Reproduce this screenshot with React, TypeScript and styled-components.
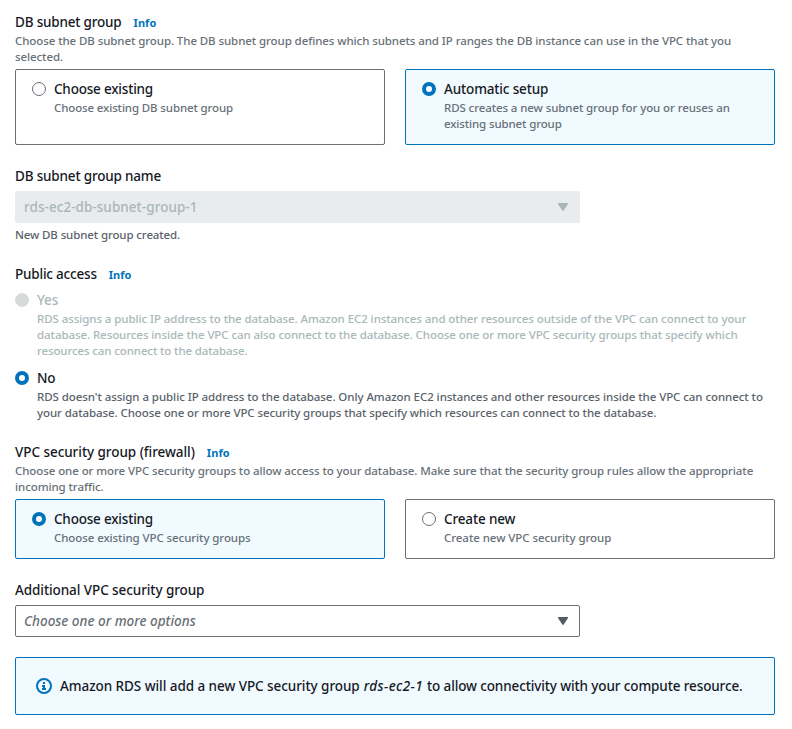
import React from "react";
import styled, { createGlobalStyle } from "styled-components";

const color = {
  text: "#16191f",
  hint: "#687078",
  strongHint: "#5a626b",
  control: "#545b64",
  link: "#0073bb",
  disabled: "#aab7b8",
  disabledFill: "#d5dbdb",
  disabledBg: "#e9ecec",
  activeBg: "#f1faff",
};

const GlobalStyle = createGlobalStyle`
  *, *::before, *::after { box-sizing: border-box; }
  body {
    margin: 0;
    background: #fff;
    color: ${color.text};
    font-family: "Noto Sans", "Open Sans", sans-serif;
    font-weight: 500;
  }
`;

type Tracking = { $ls?: number };

const Page = styled.main`
  display: flex;
  flex-direction: column;
  gap: 20px;
  width: 792px;
  min-height: 729px;
  padding: 11px 17px 14px 15px;
`;

const Field = styled.section`
  display: flex;
  flex-direction: column;
`;

const LabelRow = styled.div`
  display: flex;
  align-items: baseline;
  gap: 12px;
  height: 22px;
`;

const Label = styled.span<Tracking & { $disabled?: boolean }>`
  display: block;
  font-size: 13.5px;
  line-height: 22px;
  white-space: nowrap;
  letter-spacing: ${(p) => p.$ls ?? 0}px;
  color: ${(p) => (p.$disabled ? color.disabled : color.text)};
`;

const InfoLink = styled.a`
  font-size: 11px;
  line-height: 22px;
  font-weight: 700;
  letter-spacing: 0.05px;
  color: ${color.link};
  cursor: pointer;
`;

const Hint = styled.span<Tracking & { $tone?: "hint" | "strongHint" | "disabled" }>`
  display: block;
  font-size: 11.5px;
  line-height: 16px;
  white-space: nowrap;
  letter-spacing: ${(p) => p.$ls ?? -0.085}px;
  color: ${(p) => color[p.$tone ?? "hint"]};
`;

const Tiles = styled.div`
  display: grid;
  grid-template-columns: 1fr 1fr;
  gap: 20px;
  margin-top: 4px;
`;

const Tile = styled.label<{ $selected?: boolean }>`
  display: flex;
  gap: 8px;
  padding: 8px 16px 12px;
  border: 1px solid ${(p) => (p.$selected ? color.link : color.hint)};
  border-radius: 2px;
  background: ${(p) => (p.$selected ? color.activeBg : "#fff")};
`;

const Radios = styled.div`
  display: flex;
  flex-direction: column;
  gap: 8px;
  margin-top: 4px;
`;

const RadioRow = styled.label`
  display: flex;
  gap: 8px;
`;

const Dot = styled.span<{ $state: "on" | "off" | "disabled" }>`
  flex: none;
  width: 14px;
  height: 14px;
  margin-top: 4px;
  border-radius: 50%;
  border: ${(p) =>
    p.$state === "on"
      ? `4px solid ${color.link}`
      : `1px solid ${p.$state === "off" ? color.hint : color.disabledFill}`};
  background: ${(p) => (p.$state === "disabled" ? color.disabledFill : "#fff")};
`;

const SelectBox = styled.div<{ $disabled?: boolean }>`
  display: flex;
  align-items: center;
  justify-content: space-between;
  width: 565px;
  height: 32px;
  margin: 4px 0 0;
  padding: 0 10px 0 8px;
  border: 1px solid ${(p) => (p.$disabled ? color.disabledBg : color.hint)};
  border-radius: 2px;
  background: ${(p) => (p.$disabled ? color.disabledBg : "#fff")};
  color: ${(p) => (p.$disabled ? color.disabled : color.control)};
`;

const SelectText = styled.span<Tracking & { $placeholder?: boolean }>`
  font-size: 13.5px;
  line-height: 22px;
  letter-spacing: ${(p) => p.$ls ?? 0}px;
  font-style: ${(p) => (p.$placeholder ? "italic" : "normal")};
  color: ${(p) => (p.$placeholder ? color.hint : "inherit")};
`;

const HelpText = styled.div`
  margin-top: 4px;
`;

const Alert = styled.div`
  display: flex;
  align-items: center;
  gap: 8px;
  height: 58px;
  padding: 0 20px;
  border: 1px solid ${color.link};
  border-radius: 2px;
  background: ${color.activeBg};
`;

const AlertText = styled.p`
  display: flex;
  gap: 4px;
  margin: 0;
  font-size: 13.5px;
  line-height: 22px;
  white-space: nowrap;
`;

const Run = styled.span<Tracking>`
  letter-spacing: ${(p) => p.$ls ?? 0}px;
`;

const Name = styled(Run)`
  font-style: italic;
`;

const Caret = () => (
  <svg width="12" height="10" viewBox="0 0 12 10">
    <path d="M1 1h10v1L6.7 8.5q-.7.9-1.4 0L1 2z" fill="currentColor" />
  </svg>
);

const InfoIcon = () => (
  <svg width="16" height="16" viewBox="0 0 16 16" fill="none" stroke={color.link} strokeWidth="2">
    <circle cx="8" cy="8" r="7" />
    <path d="M8 4v2M6 8h2v3M6 11h4" />
  </svg>
);

export default function App() {
  return (
    <>
      <GlobalStyle />
      <Page>
        <Field>
          <LabelRow>
            <Label $ls={-0.19}>DB subnet group</Label>
            <InfoLink>Info</InfoLink>
          </LabelRow>
          <Hint>
            Choose the DB subnet group. The DB subnet group defines which subnets and IP ranges the DB instance can use in the VPC that you
          </Hint>
          <Hint>selected.</Hint>
          <Tiles>
            <Tile>
              <Dot $state="off" />
              <div>
                <Label $ls={-0.2}>Choose existing</Label>
                <Hint $ls={-0.13}>Choose existing DB subnet group</Hint>
              </div>
            </Tile>
            <Tile $selected>
              <Dot $state="on" />
              <div>
                <Label $ls={-0.15}>Automatic setup</Label>
                <Hint $ls={-0.1}>RDS creates a new subnet group for you or reuses an</Hint>
                <Hint $ls={-0.13}>existing subnet group</Hint>
              </div>
            </Tile>
          </Tiles>
        </Field>

        <Field>
          <Label $ls={-0.18}>DB subnet group name</Label>
          <SelectBox $disabled>
            <SelectText $ls={0.05}>rds-ec2-db-subnet-group-1</SelectText>
            <Caret />
          </SelectBox>
          <HelpText>
            <Hint $tone="strongHint" $ls={-0.12}>New DB subnet group created.</Hint>
          </HelpText>
        </Field>

        <Field>
          <LabelRow>
            <Label $ls={-0.2}>Public access</Label>
            <InfoLink>Info</InfoLink>
          </LabelRow>
          <Radios>
            <RadioRow>
              <Dot $state="disabled" />
              <div>
                <Label $disabled $ls={-0.1}>Yes</Label>
                <Hint $tone="disabled" $ls={-0.078}>
                  RDS assigns a public IP address to the database. Amazon EC2 instances and other resources outside of the VPC can connect to your
                </Hint>
                <Hint $tone="disabled" $ls={-0.078}>
                  database. Resources inside the VPC can also connect to the database. Choose one or more VPC security groups that specify which
                </Hint>
                <Hint $tone="disabled" $ls={-0.12}>resources can connect to the database.</Hint>
              </div>
            </RadioRow>
            <RadioRow>
              <Dot $state="on" />
              <div>
                <Label $ls={-0.2}>No</Label>
                <Hint $tone="strongHint" $ls={-0.07}>
                  RDS doesn't assign a public IP address to the database. Only Amazon EC2 instances and other resources inside the VPC can connect to
                </Hint>
                <Hint $tone="strongHint" $ls={-0.09}>
                  your database. Choose one or more VPC security groups that specify which resources can connect to the database.
                </Hint>
              </div>
            </RadioRow>
          </Radios>
        </Field>

        <Field>
          <LabelRow>
            <Label $ls={-0.05}>VPC security group (firewall)</Label>
            <InfoLink>Info</InfoLink>
          </LabelRow>
          <Hint>
            Choose one or more VPC security groups to allow access to your database. Make sure that the security group rules allow the appropriate
          </Hint>
          <Hint>incoming traffic.</Hint>
          <Tiles>
            <Tile $selected>
              <Dot $state="on" />
              <div>
                <Label $ls={-0.2}>Choose existing</Label>
                <Hint>Choose existing VPC security groups</Hint>
              </div>
            </Tile>
            <Tile>
              <Dot $state="off" />
              <div>
                <Label $ls={-0.14}>Create new</Label>
                <Hint $ls={-0.06}>Create new VPC security group</Hint>
              </div>
            </Tile>
          </Tiles>
        </Field>

        <Field>
          <Label $ls={-0.08}>Additional VPC security group</Label>
          <SelectBox>
            <SelectText $placeholder $ls={0.01}>Choose one or more options</SelectText>
            <Caret />
          </SelectBox>
        </Field>

        <Alert>
          <InfoIcon />
          <AlertText>
            <Run $ls={-0.06}>Amazon RDS will add a new VPC security group</Run>
            <Name $ls={0.4}>rds-ec2-1</Name>
            <Run $ls={-0.12}>to allow connectivity with your compute resource.</Run>
          </AlertText>
        </Alert>
      </Page>
    </>
  );
}
